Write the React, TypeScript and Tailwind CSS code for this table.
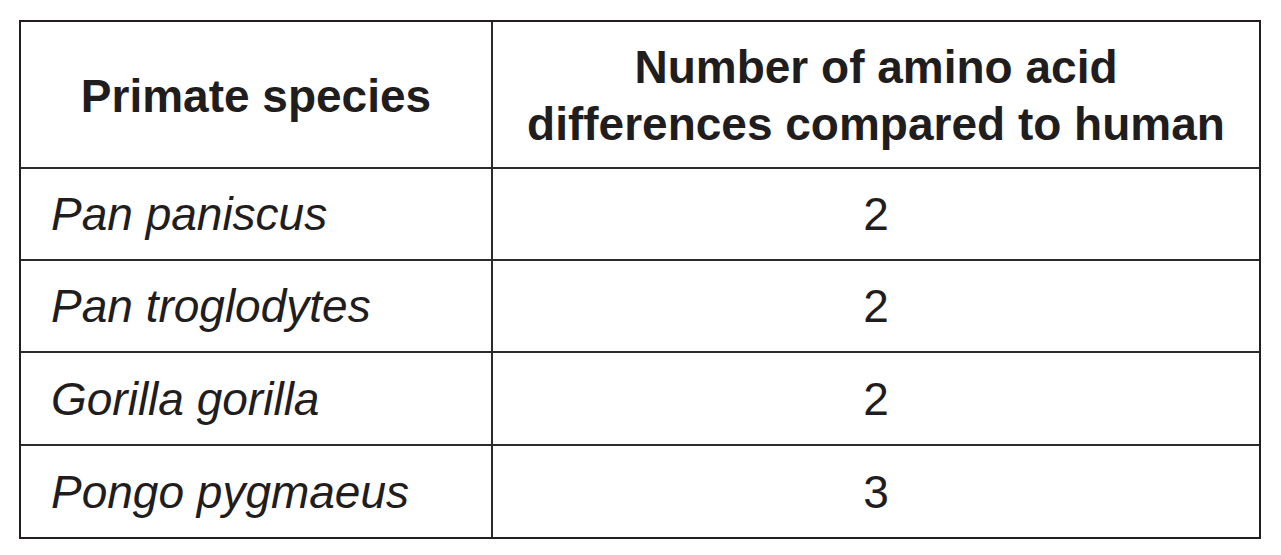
const rows = [
  { species: "Pan paniscus", diff: 2, h: "h-[92px]" },
  { species: "Pan troglodytes", diff: 2, h: "h-[92px]" },
  { species: "Gorilla gorilla", diff: 2, h: "h-[93px]" },
  { species: "Pongo pygmaeus", diff: 3, h: "h-[91px]" },
]

export default function App() {
  return (
    <div className="h-[555px] w-[1281px] bg-white pl-[19px] pt-[20px] font-['Liberation_Sans',Arial,sans-serif] text-[46px] text-[#1f1d1e]">
      <div className="w-[1242px] border-2 border-[#231f20]">
        <div className="grid h-[147px] grid-cols-[472px_766px] border-b-2 border-[#2b2b2b]">
          <div className="flex items-center justify-center border-r-2 border-[#2b2b2b] pt-[3px] font-bold leading-[52px]">
            Primate species
          </div>
          <div className="flex items-center justify-center pt-[2px] text-center font-bold leading-[57px]">
            Number of amino acid
            <br />
            differences compared to human
          </div>
        </div>
        {rows.map((r, i) => (
          <div
            key={r.species}
            className={`grid grid-cols-[472px_766px] ${r.h} ${i < rows.length - 1 ? "border-b-2 border-[#2b2b2b]" : ""}`}
          >
            <div className="flex items-center border-r-2 border-[#2b2b2b] pl-[30px] italic leading-[52px]">
              {r.species}
            </div>
            <div className="flex items-center justify-center leading-[52px]">{r.diff}</div>
          </div>
        ))}
      </div>
    </div>
  )
}
